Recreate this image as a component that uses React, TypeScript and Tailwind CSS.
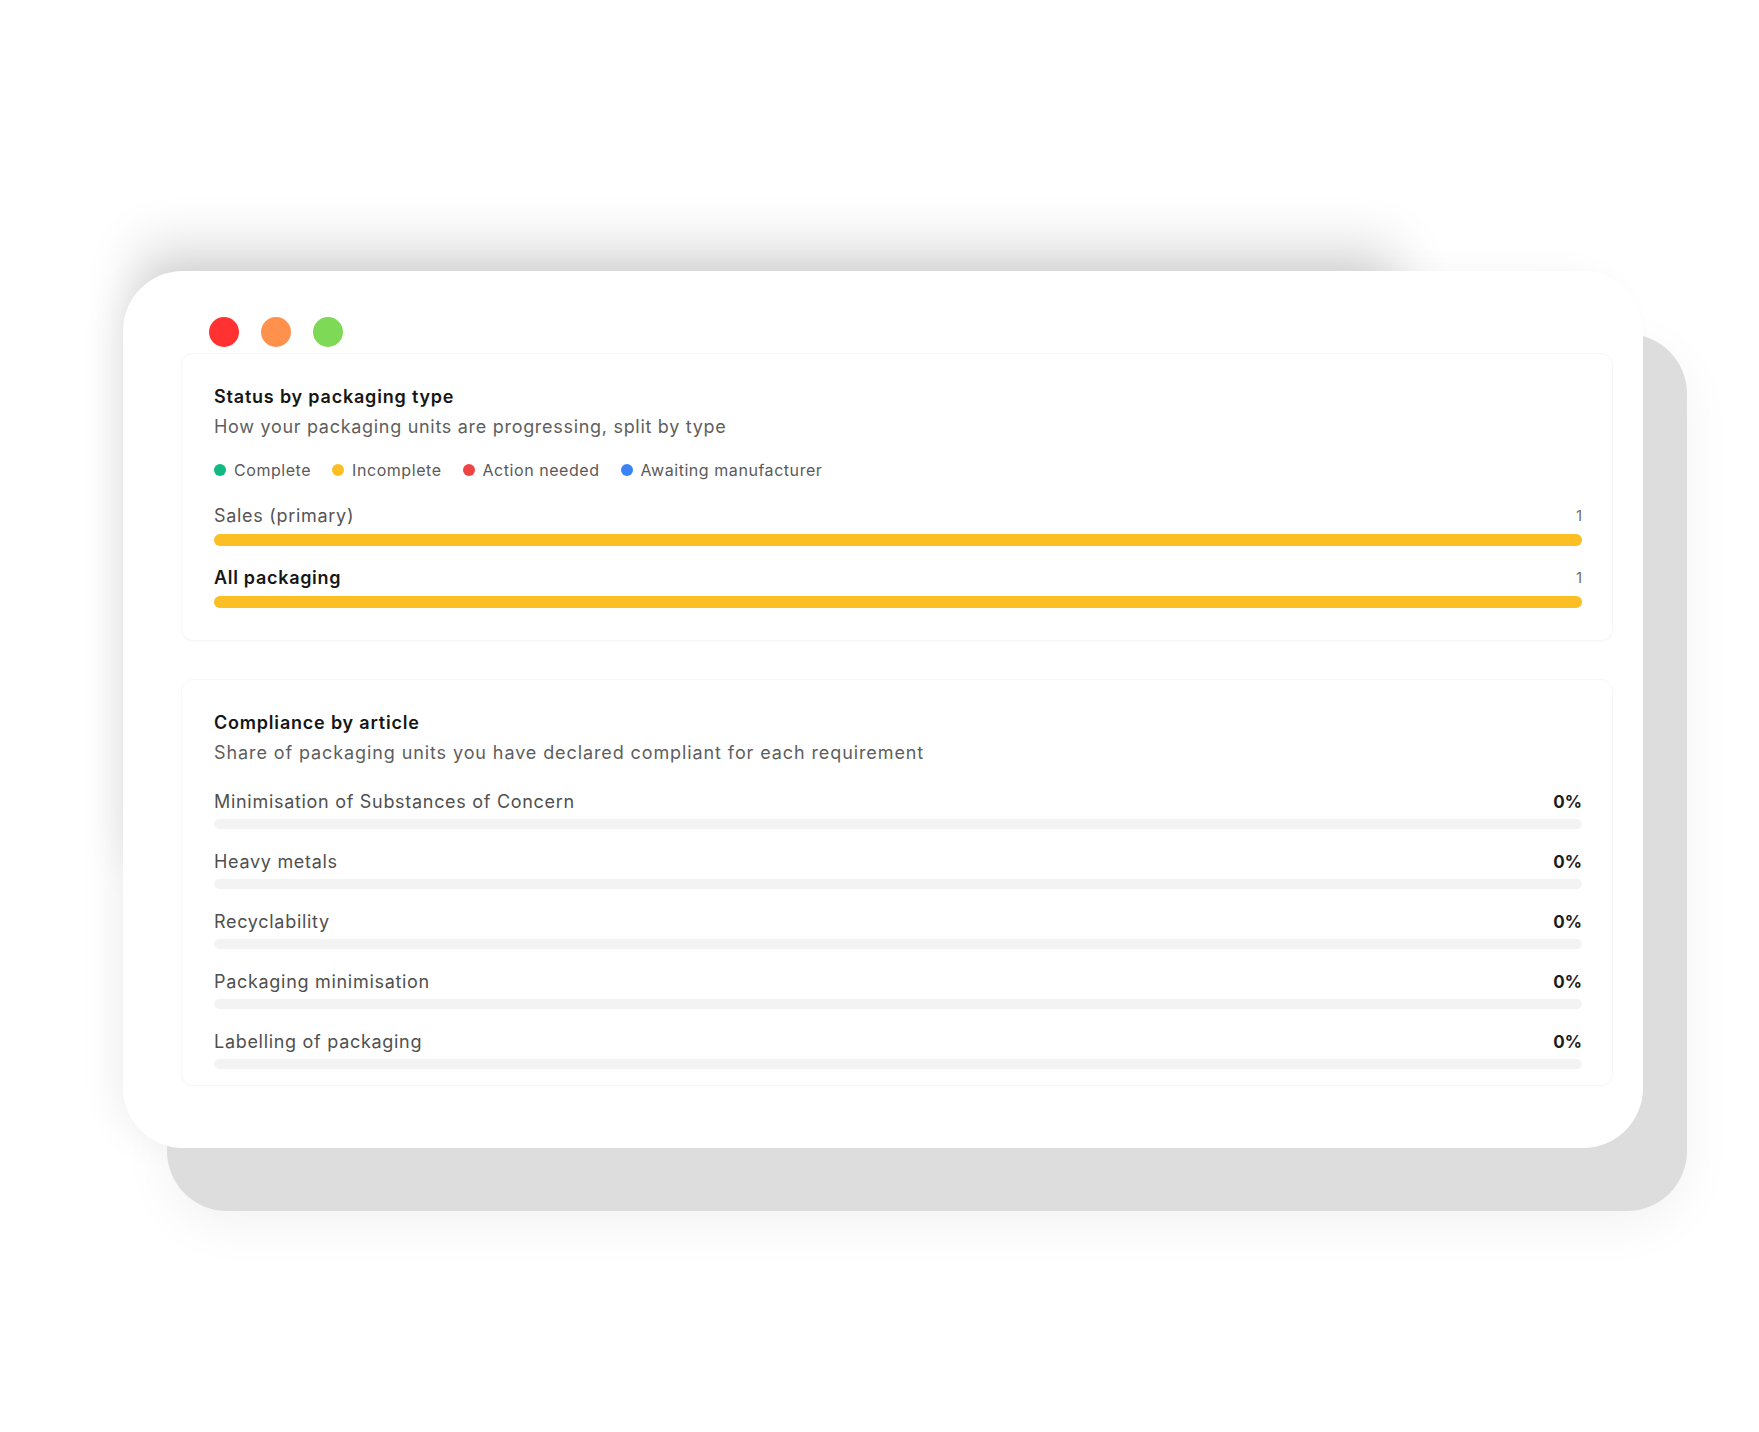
import React from 'react'

const legend = [
  { label: 'Complete', dot: 'bg-[#10b981]' },
  { label: 'Incomplete', dot: 'bg-[#fbbf24]' },
  { label: 'Action needed', dot: 'bg-[#ef4444]' },
  { label: 'Awaiting manufacturer', dot: 'bg-[#3b82f6]' },
]

const packagingRows = [
  { label: 'Sales (primary)', count: 1, strong: false },
  { label: 'All packaging', count: 1, strong: true },
]

const articles = [
  'Minimisation of Substances of Concern',
  'Heavy metals',
  'Recyclability',
  'Packaging minimisation',
  'Labelling of packaging',
]

function StatusPanel() {
  return (
    <div className="mt-[6px] rounded-[12px] border border-[#f7f7f7] bg-white pl-[32px] pr-[30px] pt-[31px] pb-[32px] shadow-[0_1px_2px_rgba(0,0,0,0.02)]">
      <h2 className="text-[18px] leading-[24px] font-semibold tracking-[0.8px] text-[#161616]">
        Status by packaging type
      </h2>
      <p className="mt-[6px] text-[18px] leading-[24px] tracking-[0.7px] text-[#5e5e5e]">
        How your packaging units are progressing, split by type
      </p>

      <div className="mt-[21px] flex items-center h-[20px]">
        {legend.map((l, i) => (
          <div key={l.label} className={`flex items-center gap-[8px] ${i > 0 ? 'ml-[21px]' : ''}`}>
            <span className={`w-[12px] h-[12px] rounded-full ${l.dot}`} />
            <span className="text-[16px] leading-[20px] tracking-[0.55px] text-[#5a5a5a]">{l.label}</span>
          </div>
        ))}
      </div>

      <div className="mt-[24px] flex flex-col gap-[20px]">
        {packagingRows.map((r) => (
          <div key={r.label}>
            <div className="flex items-center justify-between h-[24px]">
              <span
                className={
                  r.strong
                    ? 'text-[18px] leading-[24px] font-semibold tracking-[0.7px] text-[#161616]'
                    : 'text-[18px] leading-[24px] tracking-[0.7px] text-[#555]'
                }
              >
                {r.label}
              </span>
              <span className="text-[15px] leading-[24px] text-[#6f6f6f]">{r.count}</span>
            </div>
            <div className="mt-[6px] h-[12px] rounded-full bg-[#f3f3f3]">
              <div className="h-full rounded-full bg-[#fbbf24]" style={{ width: '100%' }} />
            </div>
          </div>
        ))}
      </div>
    </div>
  )
}

function CompliancePanel() {
  return (
    <div className="mt-[38px] h-[407px] rounded-[12px] border border-[#f7f7f7] bg-white pl-[32px] pr-[30px] pt-[31px] shadow-[0_1px_2px_rgba(0,0,0,0.015)]">
      <h2 className="text-[18px] leading-[24px] font-semibold tracking-[0.8px] text-[#161616]">
        Compliance by article
      </h2>
      <p className="mt-[6px] text-[18px] leading-[24px] tracking-[0.9px] text-[#5e5e5e]">
        Share of packaging units you have declared compliant for each requirement
      </p>

      <div className="mt-[25px] flex flex-col gap-[21px]">
        {articles.map((a) => (
          <div key={a}>
            <div className="flex items-center justify-between h-[24px]">
              <span className="text-[18px] leading-[24px] tracking-[0.7px] text-[#4f4f4f]">{a}</span>
              <span className="text-[17px] leading-[24px] font-bold text-[#1e1e1e]">0%</span>
            </div>
            <div className="mt-[5px] h-[10px] rounded-full bg-[#f3f3f3]">
              <div className="h-full rounded-full bg-[#10b981]" style={{ width: '0%' }} />
            </div>
          </div>
        ))}
      </div>
    </div>
  )
}

export default function App() {
  return (
    <div className="min-h-[1432px] w-full bg-white pt-[271px] pl-[123px] [font-family:Inter,'Noto_Sans',sans-serif] antialiased">
      <div className="w-[1520px] h-[877px] rounded-[60px] bg-white pt-[46px] pl-[58px] pr-[30px] shadow-[44px_63px_0_0_#dddddd,44px_78px_50px_rgba(0,0,0,0.05),-115px_-155px_50px_-132px_rgba(0,0,0,0.16),-16px_0_40px_-10px_rgba(0,0,0,0.07)]">
        <div className="flex gap-[22px] pl-[28px]">
          <span className="w-[30px] h-[30px] rounded-full bg-[#ff3131]" />
          <span className="w-[30px] h-[30px] rounded-full bg-[#ff914d]" />
          <span className="w-[30px] h-[30px] rounded-full bg-[#7ed957]" />
        </div>
        <StatusPanel />
        <CompliancePanel />
      </div>
    </div>
  )
}
